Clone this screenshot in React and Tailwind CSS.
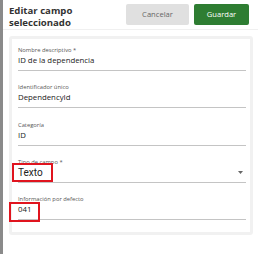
export default function App() {
  const font = { fontFamily: '"Open Sans", "Noto Sans", sans-serif' };
  const Field = ({ label, value, select }) => (
    <div className="h-[30px] shrink-0 flex flex-col justify-end border-b border-[#c4c4c4]">
      <div className="text-[5.8px] leading-[8px] text-[#555]">{label}</div>
      {select ? (
        <div className="flex items-center justify-between pb-[2px] pr-[3px]">
          <span className="text-[10px] leading-[14px] text-[#222]" style={{ fontFamily: 'Roboto, sans-serif' }}>{value}</span>
          <svg width="5" height="3" viewBox="0 0 5 3"><path d="M0 0h5L2.5 3z" fill="#666" /></svg>
        </div>
      ) : (
        <div className="text-[7.8px] leading-[13px] pb-[3px] text-[#222]">{value}</div>
      )}
    </div>
  );
  return (
    <div className="relative w-[258px] h-[254px] flex bg-white overflow-hidden" style={font}>
      <div className="w-[3px] bg-[#8a8a8a] shadow-[1px_0_2px_rgba(0,0,0,0.3)]" />
      <div className="flex-1 bg-white flex flex-col">
        <div className="flex justify-between items-start pl-[6px] pr-[9px] pt-[4px] h-[30px] shrink-0 border-b border-[#f0f0f0]">
          <div className="text-[9.6px] leading-[12px] font-bold text-[#333] pt-[1px]">Editar campo<br />seleccionado</div>
          <div className="flex gap-[5px]">
            <div className="w-[63px] h-[21px] rounded-[2px] bg-[#e0e0e0] flex items-center justify-center text-[7.6px] text-[#666]">Cancelar</div>
            <div className="w-[55px] h-[21px] rounded-[2px] bg-[#2e7d32] flex items-center justify-center text-[7.6px] font-medium text-white">Guardar</div>
          </div>
        </div>
        <div className="mt-[6px] ml-[6px] w-[244px] shrink-0 border-[3px] border-[#f1f1f1] rounded-[3px] bg-white pl-[6px] pr-[4px] pt-[2px] pb-[12px] flex flex-col gap-[7.3px]">
          <Field label="Nombre descriptivo *" value="ID de la dependencia" />
          <Field label="Identificador único" value="DependencyId" />
          <Field label="Categoría" value="ID" />
          <Field label="Tipo de campo *" value="Texto" select />
          <Field label="Información por defecto" value="041" />
        </div>
      </div>
      <div className="absolute left-[12px] top-[163px] w-[41px] h-[19px] border-2 border-[#e0141e]" />
      <div className="absolute left-[9px] top-[202px] w-[31px] h-[20px] border-2 border-[#e0141e]" />
    </div>
  );
}
